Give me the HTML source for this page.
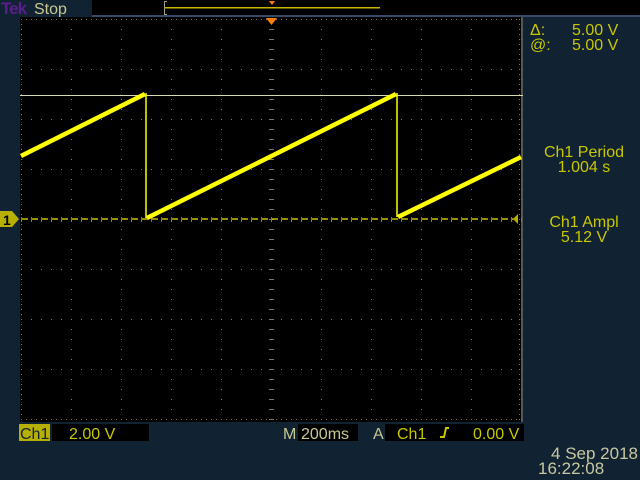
<!DOCTYPE html>
<html><head><meta charset="utf-8"><style>
html,body{margin:0;padding:0;background:#112233;width:640px;height:480px;overflow:hidden}
svg{display:block}
text{font-family:"Liberation Sans",sans-serif}
</style></head><body>
<svg id="s" width="640" height="480" viewBox="0 0 640 480" xmlns="http://www.w3.org/2000/svg">
<rect width="640" height="480" fill="#112233"/>
<rect x="92" y="0" width="548" height="16" fill="#000"/>
<rect x="92" y="15" width="548" height="2" fill="#3a4a66"/>
<text x="1" y="14" font-size="17" fill="#5a1e8c" font-weight="bold" letter-spacing="-1">Tek</text>
<text x="34" y="14" font-size="16" fill="#c8c890">Stop</text>
<path d="M167 1.5 H164.5 V14.5 H167" stroke="#a09a70" fill="none"/>
<rect x="165" y="7" width="215" height="1.5" fill="#c8b400"/>
<path d="M269 1 L275 1 L272 5 Z" fill="#ff8000"/>
<rect x="20" y="17" width="503" height="405" fill="#000"/>
<rect x="521" y="17" width="2" height="405" fill="#555"/>
<g id="grid" fill="#7a7a60"></g>
<path d="M266 18 L277 18 L271.5 25 Z" fill="#ff8000"/>
<rect x="20" y="95" width="503" height="1" fill="#d8d8b0"/>
<line x1="22" y1="219" x2="521" y2="219" stroke="#c8c000" stroke-width="1.5" stroke-dasharray="6 4"/>
<g stroke="#ffff00" fill="none">
<path d="M21 156 L145 94 M147 218 L396 94 M398 217 L521 157" stroke-width="4.5"/>
<path d="M146 93 V218 M397 93 V217" stroke-width="1.5"/>
</g>
<path d="M0 211 H12 L19 219 L12 227 H0 Z" fill="#b8b000"/>
<text x="3" y="225" font-size="14" fill="#000" font-weight="bold">1</text>
<path d="M518 214 L513 219 L518 224 Z" fill="#b8b000"/>
<g fill="#c8c800" font-size="16">
<text x="530" y="35">Δ:</text><text x="572" y="35">5.00 V</text>
<text x="530" y="50">@:</text><text x="572" y="50">5.00 V</text>
<text x="584" y="157" text-anchor="middle">Ch1 Period</text>
<text x="584" y="172" text-anchor="middle">1.004 s</text>
<text x="584" y="227" text-anchor="middle">Ch1 Ampl</text>
<text x="584" y="242" text-anchor="middle">5.12 V</text>
</g>
<rect x="19" y="424" width="31" height="17" fill="#b8b000"/>
<text x="20" y="439" font-size="16" fill="#112233">Ch1</text>
<rect x="52" y="424" width="97" height="17" fill="#000"/>
<text x="69" y="439" font-size="16" fill="#c8c800">2.00 V</text>
<text x="283" y="439" font-size="16" fill="#c8c890">M</text>
<rect x="298" y="424" width="60" height="17" fill="#000"/>
<text x="301" y="439" font-size="16" fill="#c8c890">200ms</text>
<text x="373" y="439" font-size="16" fill="#c8c890">A</text>
<rect x="385" y="424" width="139" height="17" fill="#000"/>
<text x="397" y="439" font-size="16" fill="#c8c800">Ch1</text>
<path d="M440 437 H444 L446 428 H449" stroke="#c8c800" stroke-width="2" fill="none"/>
<text x="473" y="439" font-size="16" fill="#c8c800">0.00 V</text>
<g fill="#c8c8a0" font-size="17">
<text x="638" y="459" text-anchor="end">4 Sep  2018</text>
<text x="538" y="474">16:22:08</text>
</g>
</svg>
<script>
var g=document.getElementById('grid'),h='';
function d(x,y,w,hh){h+='<rect x="'+x+'" y="'+y+'" width="'+(w||1)+'" height="'+(hh||1)+'"/>';}
for(var i=0;i<=10;i++){var x=21+50*i;for(var y=19;y<=419;y+=10)d(x,y);}
for(var j=0;j<=8;j++){var y=19+50*j;for(var x=21;x<=521;x+=10)d(x,y);}
for(var y=19;y<=419;y+=10){d(269,y,5,1);}
for(var x=21;x<=521;x+=10){d(x,217,1,5);}
for(var x=21;x<=521;x+=5){d(x,19);d(x,419);}
for(var y=19;y<=419;y+=5){d(21,y);d(519,y);}
g.innerHTML=h;
</script>
</body></html>
